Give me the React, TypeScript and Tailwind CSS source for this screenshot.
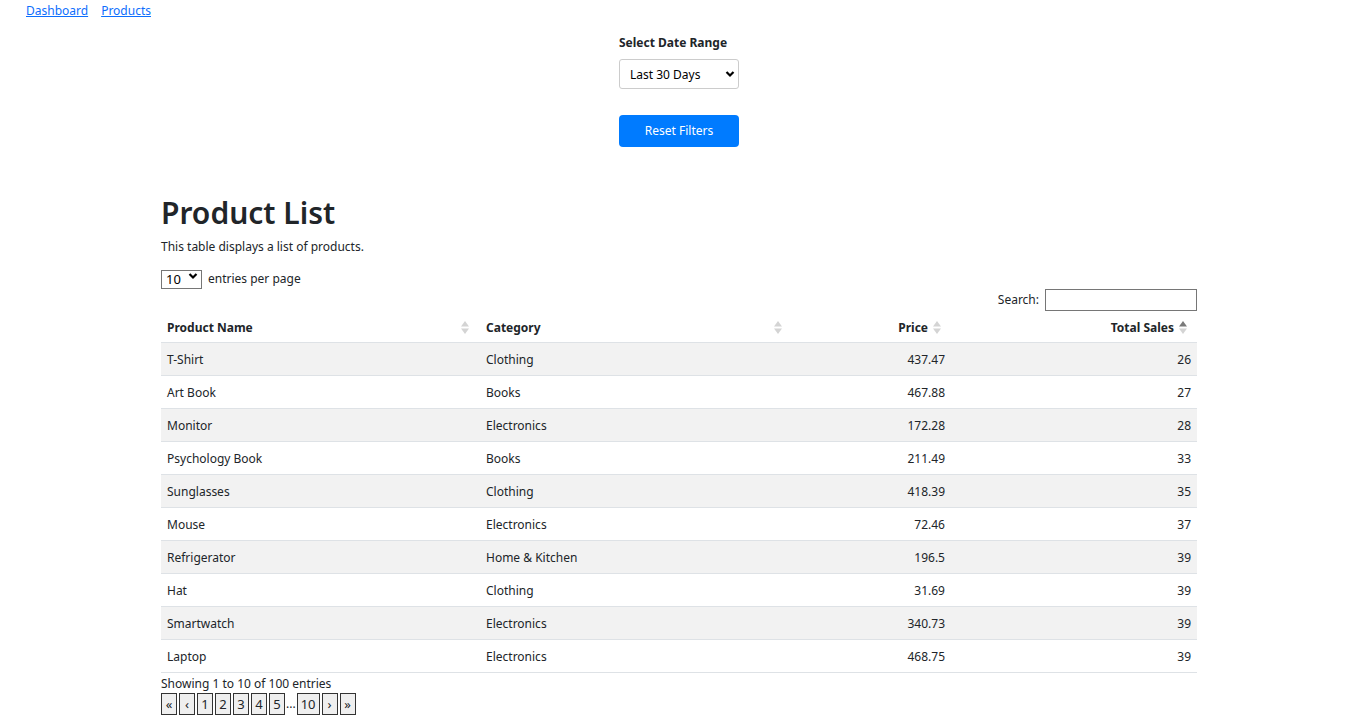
import React from "react";

// Données du tableau (triées par ventes croissantes)
const products = [
  { name: "T-Shirt", category: "Clothing", price: "437.47", sales: 26 },
  { name: "Art Book", category: "Books", price: "467.88", sales: 27 },
  { name: "Monitor", category: "Electronics", price: "172.28", sales: 28 },
  { name: "Psychology Book", category: "Books", price: "211.49", sales: 33 },
  { name: "Sunglasses", category: "Clothing", price: "418.39", sales: 35 },
  { name: "Mouse", category: "Electronics", price: "72.46", sales: 37 },
  { name: "Refrigerator", category: "Home & Kitchen", price: "196.5", sales: 39 },
  { name: "Hat", category: "Clothing", price: "31.69", sales: 39 },
  { name: "Smartwatch", category: "Electronics", price: "340.73", sales: 39 },
  { name: "Laptop", category: "Electronics", price: "468.75", sales: 39 },
];

// Petite icône de tri (deux triangles), "active" = triangle du haut foncé
function SortIcon({ active }: { active?: boolean }) {
  return (
    <svg width="8" height="13" viewBox="0 0 8 13" className="shrink-0">
      <path d="M4 0 L8 5.5 L0 5.5 Z" fill={active ? "#7a7a7a" : "#d4d4d4"} />
      <path d="M4 13 L8 7.5 L0 7.5 Z" fill="#d4d4d4" />
    </svg>
  );
}

function PageButton({ label }: { label: string }) {
  return (
    <button className="h-[22px] min-w-[16px] px-[3px] mr-[2px] border border-[#333] bg-[#efefef] leading-[18px]">
      {label}
    </button>
  );
}

export default function App() {
  return (
    <div
      className="min-h-screen bg-white text-[#212529]"
      style={{ fontFamily: "'Segoe UI', 'Noto Sans', sans-serif" }}
    >
      {/* Navigation */}
      <nav className="flex gap-[13px] pl-[26px] pt-[2px] text-[12px] leading-[18px]">
        <a href="#" className="text-[#0d6efd] underline">Dashboard</a>
        <a href="#" className="text-[#0d6efd] underline">Products</a>
      </nav>

      {/* Filtres */}
      <div className="flex flex-col items-start w-[120px] mx-auto mt-[14px]">
        <label className="text-[12px] font-bold leading-[18px]">Select Date Range</label>
        <div className="relative mt-[7px] w-[120px]">
          <select className="appearance-none w-full h-[30px] border border-[#ccc] rounded-[3px] pl-[10px] pt-[1px] text-[12px] bg-white text-black">
            <option>Last 30 Days</option>
          </select>
          <svg className="absolute right-[4px] top-[11px] pointer-events-none" width="10" height="8" viewBox="0 0 10 8">
            <path d="M1.5 2 L5 5.5 L8.5 2" stroke="#000" strokeWidth="2.2" fill="none" />
          </svg>
        </div>
        <button className="mt-[26px] w-[120px] h-[32px] rounded-[4px] bg-[#007bff] text-white text-[12px]">
          Reset Filters
        </button>
      </div>

      {/* Liste des produits */}
      <div className="w-[1036px] mx-auto mt-[46px]">
        <h1 className="text-[30px] font-semibold leading-[40px]">Product List</h1>
        <p className="text-[12px] leading-[16px] mt-[6px]">This table displays a list of products.</p>

        <div className="flex items-center gap-[6px] mt-[11px]">
          <div className="relative">
            <select className="appearance-none w-[41px] h-[19px] border border-[#767676] pl-[4px] text-[13px] leading-[15px] bg-white text-black">
              <option>10</option>
            </select>
            <svg className="absolute right-[4px] top-[6px] pointer-events-none" width="10" height="8" viewBox="0 0 10 8">
              <path d="M1.5 2 L5 5.5 L8.5 2" stroke="#000" strokeWidth="2.2" fill="none" />
            </svg>
          </div>
          <span className="text-[12px] pt-[1px]">entries per page</span>
        </div>

        <div className="flex justify-end items-center gap-[6px] mt-[-1px]">
          <span className="text-[12px]">Search:</span>
          <input className="w-[152px] h-[22px] border border-[#767676]" />
        </div>

        <table className="w-full table-fixed border-collapse mt-[3px] text-[12px]">
          <colgroup>
            <col className="w-[319px]" />
            <col className="w-[312px]" />
            <col className="w-[159px]" />
            <col className="w-[246px]" />
          </colgroup>
          <thead>
            <tr className="h-[28px] border-b border-[#dee2e6]">
              <th className="px-[6px] font-bold">
                <div className="flex items-center justify-between pr-[5px]">
                  <span>Product Name</span>
                  <SortIcon />
                </div>
              </th>
              <th className="px-[6px] font-bold">
                <div className="flex items-center justify-between pr-[4px]">
                  <span>Category</span>
                  <SortIcon />
                </div>
              </th>
              <th className="px-[6px] font-bold">
                <div className="flex items-center justify-end gap-[5px] pr-[4px]">
                  <span>Price</span>
                  <SortIcon />
                </div>
              </th>
              <th className="px-[6px] font-bold">
                <div className="flex items-center justify-end gap-[5px] pr-[4px]">
                  <span>Total Sales</span>
                  <SortIcon active />
                </div>
              </th>
            </tr>
          </thead>
          <tbody>
            {products.map((p, i) => (
              <tr
                key={p.name}
                className={`h-[33px] border-b border-[#dee2e6] ${i % 2 === 0 ? "bg-[#f2f2f2]" : "bg-white"}`}
              >
                <td className="px-[6px] pt-[3px]">{p.name}</td>
                <td className="px-[6px] pt-[3px]">{p.category}</td>
                <td className="px-[6px] pt-[3px] text-right">{p.price}</td>
                <td className="px-[6px] pt-[3px] text-right">{p.sales}</td>
              </tr>
            ))}
          </tbody>
        </table>

        <p className="text-[12px] leading-[16px] mt-[3px]">Showing 1 to 10 of 100 entries</p>

        {/* Pagination */}
        <div className="flex items-center text-[13px] mt-[1px]">
          {["«", "‹", "1", "2", "3", "4", "5"].map((pg) => (
            <PageButton key={pg} label={pg} />
          ))}
          <span className="text-[12px] mr-[1px] -ml-[1px]">...</span>
          {["10", "›", "»"].map((pg) => (
            <PageButton key={pg} label={pg} />
          ))}
        </div>
      </div>
    </div>
  );
}
